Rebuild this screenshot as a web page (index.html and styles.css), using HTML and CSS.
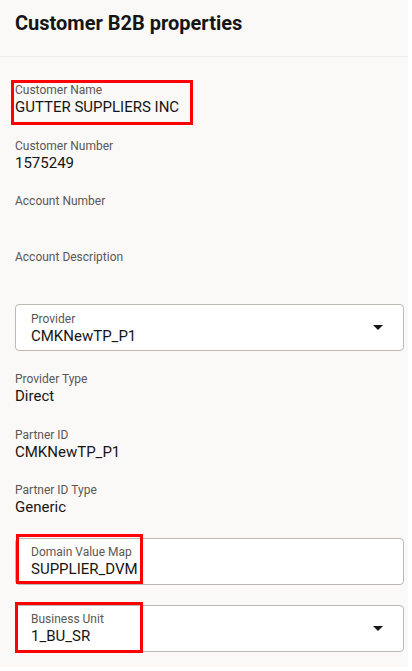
FILE: index.html
```html
<!DOCTYPE html>
<html lang="en">
<head>
    <meta charset="UTF-8">
    <meta name="viewport" content="width=device-width, initial-scale=1.0">
    <title>Customer B2B properties</title>
    <link rel="stylesheet" href="styles.css">
</head>
<body>
    <div class="panel">
        <!-- Header -->
        <header class="panel-header">
            <h1>Customer B2B properties</h1>
        </header>

        <div class="panel-body">
            <div class="field">
                <div class="label">Customer Name</div>
                <div class="value">GUTTER SUPPLIERS INC</div>
                <span class="mark mark-name"></span>
            </div>
            <div class="field">
                <div class="label">Customer Number</div>
                <div class="value">1575249</div>
            </div>
            <div class="field">
                <div class="label">Account Number</div>
                <div class="value"></div>
            </div>
            <div class="field">
                <div class="label">Account Description</div>
                <div class="value"></div>
            </div>

            <div class="input-box">
                <div class="input-text">
                    <div class="label">Provider</div>
                    <div class="value">CMKNewTP_P1</div>
                </div>
                <span class="caret"></span>
            </div>

            <div class="field">
                <div class="label">Provider Type</div>
                <div class="value">Direct</div>
            </div>
            <div class="field">
                <div class="label">Partner ID</div>
                <div class="value">CMKNewTP_P1</div>
            </div>
            <div class="field">
                <div class="label">Partner ID Type</div>
                <div class="value">Generic</div>
            </div>

            <div class="input-box">
                <div class="input-text">
                    <div class="label">Domain Value Map</div>
                    <div class="value">SUPPLIER_DVM</div>
                </div>
                <span class="mark mark-dvm"></span>
            </div>

            <div class="input-box">
                <div class="input-text">
                    <div class="label">Business Unit</div>
                    <div class="value">1_BU_SR</div>
                </div>
                <span class="caret"></span>
                <span class="mark mark-bu"></span>
            </div>
        </div>
    </div>
</body>
</html>
```

FILE: styles.css
```css
body {
    margin: 0;
    padding: 0;
    background: #fff;
    font-family: Roboto, "Noto Sans", sans-serif;
    color: #161513;
}

.panel {
    width: 408px;
    height: 667px;
    overflow: hidden;
    background: #faf9f8;
}

/* Header */
.panel-header {
    height: 57px;
    box-sizing: border-box;
    padding: 11px 15px 0;
    border-bottom: 1px solid #efedea;
}

.panel-header h1 {
    margin: 0;
    font-size: 20px;
    line-height: 24px;
    font-weight: 700;
}

.panel-body {
    display: flex;
    flex-direction: column;
    gap: 20px;
    padding: 25px 4px 0 15px;
}

/* Read only fields */
.field {
    position: relative;
}

.label {
    padding-top: 1px;
    font-size: 12px;
    line-height: 15px;
    color: #5b5753;
}

.value {
    font-size: 15px;
    line-height: 19.5px;
    min-height: 19.5px;
}

/* Select / text boxes */
.input-box {
    position: relative;
    height: 47px;
    box-sizing: border-box;
    display: flex;
    align-items: center;
    padding: 0 20px 0 15px;
    background: #fff;
    border: 1px solid #bcb9b5;
    border-radius: 4px;
}

.input-text {
    flex: 1;
    padding-top: 2px;
}

.caret {
    width: 0;
    height: 0;
    border-left: 5px solid transparent;
    border-right: 5px solid transparent;
    border-top: 5px solid #161513;
}

/* Red annotation frames */
.mark {
    position: absolute;
    border: 3px solid #f00;
    box-sizing: border-box;
    pointer-events: none;
}

.mark-name {
    left: -4px;
    top: -2px;
    width: 182px;
    height: 45px;
}

.mark-dvm {
    left: 0;
    top: -5px;
    width: 127px;
    height: 50px;
}

.mark-bu {
    left: -1px;
    top: -4px;
    width: 128px;
    height: 51px;
}
```
